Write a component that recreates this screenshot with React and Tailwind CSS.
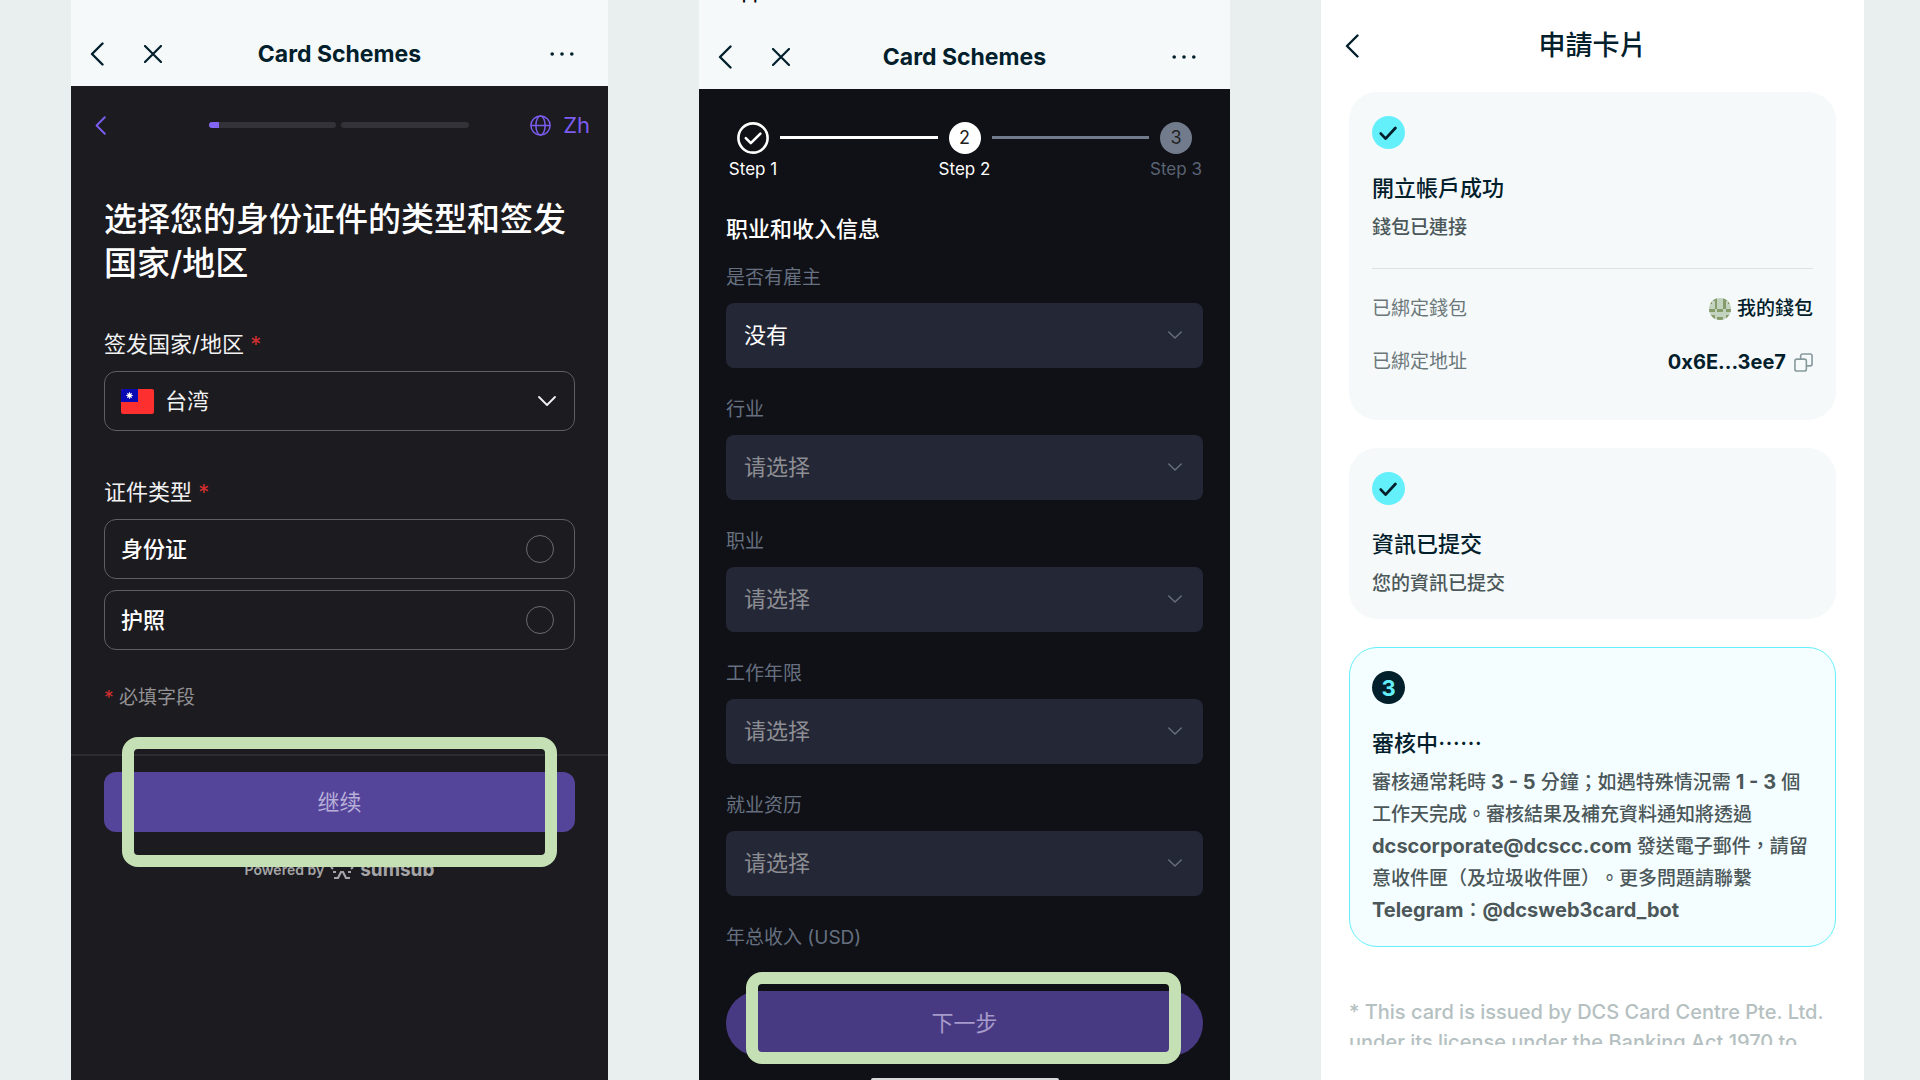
import React, { useState } from "react";

const employerOptions = ["没有", "有"];

const fields = [
  { id: "employer", label: "是否有雇主", options: employerOptions },
  { id: "industry", label: "行业" },
  { id: "occupation", label: "职业" },
  { id: "years", label: "工作年限" },
  { id: "experience", label: "就业资历" },
];

// 8x8 identicon, 1 = dark cell
const avatarRows = [
  "11100111",
  "10100101",
  "00100100",
  "00100100",
  "11011011",
  "00000000",
  "11000011",
  "11011011",
];

const BackIcon = ({ className }) => (
  <svg viewBox="0 0 14 24" className={className} fill="none" stroke="currentColor" strokeLinecap="round" strokeLinejoin="round">
    <path d="M12.5 1.5 2 12l10.5 10.5" strokeWidth="2.4" />
  </svg>
);

const ChevronDown = ({ className }) => (
  <svg viewBox="0 0 18 10" className={className} fill="none" stroke="currentColor" strokeLinecap="round" strokeLinejoin="round">
    <path d="M1 1l8 8 8-8" strokeWidth="1.8" />
  </svg>
);

const DoneBadge = () => (
  <svg viewBox="0 0 33 33" className="size-[33px]" fill="none">
    <circle cx="16.5" cy="16.5" r="16.5" fill="#64f0fb" />
    <path d="M8.8 17.6l4.8 5L23.4 12" stroke="#02202b" strokeWidth="2.8" strokeLinecap="round" strokeLinejoin="round" />
  </svg>
);

const Highlight = ({ className }) => (
  <div className={`pointer-events-none absolute rounded-2xl border-12 border-[#c5e0b4] ${className}`} />
);

const Required = () => <span className="text-[#d32f2f]">*</span>;

const WebviewHeader = ({ status, className }) => (
  <header className={`flex flex-col bg-[#f5f9fa] text-[#02202b] ${className}`}>
    <div className="flex h-[3px] items-end overflow-hidden pl-[30px] text-lg leading-5 font-medium text-black">{status}</div>
    <div className="mt-auto grid h-16 grid-cols-[1fr_auto_1fr] items-center px-[19px]">
      <div className="flex items-center gap-10">
        <button type="button" aria-label="Back"><BackIcon className="h-6 w-3.5" /></button>
        <button type="button" aria-label="Close">
          <svg viewBox="0 0 18 18" className="size-[18px]" stroke="currentColor" strokeWidth="2.2" strokeLinecap="round">
            <path d="M1 1l16 16M17 1L1 17" />
          </svg>
        </button>
      </div>
      <h1 className="text-[23px] leading-8 font-bold">Card Schemes</h1>
      <button type="button" aria-label="More" className="justify-self-end pr-[15px]">
        <svg viewBox="0 0 24 4" className="h-1 w-6" fill="currentColor">
          <circle cx="2.2" cy="2" r="1.8" />
          <circle cx="12" cy="2" r="1.8" />
          <circle cx="21.8" cy="2" r="1.8" />
        </svg>
      </button>
    </div>
  </header>
);

const IdentityPhone = () => {
  const [docType, setDocType] = useState("");

  return (
    <section lang="zh-CN" className="flex flex-col bg-[#1c1b1f] font-['Inter','Noto_Sans_CJK_SC',sans-serif]">
      <WebviewHeader className="h-[86px]" />

      <div className="mt-[25px] grid h-7 grid-cols-[114fr_259fr_121fr] items-center pr-[18px] pl-6 text-[#7b5cf0]">
        <button type="button" aria-label="返回"><BackIcon className="h-[19px] w-[11px]" /></button>
        <div className="flex gap-[5px]">
          <div className="h-1.5 flex-1 overflow-hidden rounded-full bg-[#333238]">
            <div className="h-full w-2.5 bg-[#8265f2]" />
          </div>
          <div className="h-1.5 flex-1 rounded-full bg-[#333238]" />
        </div>
        <button type="button" className="flex items-center gap-3 justify-self-end text-[22px] leading-7">
          <svg viewBox="0 0 21 21" className="size-[21px]" fill="none" stroke="currentColor" strokeWidth="1.5">
            <circle cx="10.5" cy="10.5" r="9.6" />
            <ellipse cx="10.5" cy="10.5" rx="4.6" ry="9.6" />
            <path d="M1 10.5h19" />
          </svg>
          Zh
        </button>
      </div>

      <form className="flex flex-col px-[33px] text-[#f2f2f3]">
        <h2 className="mt-[58px] text-[33px] leading-[44px] font-medium text-white">选择您的身份证件的类型和签发国家/地区</h2>

        <label htmlFor="country" className="mt-11 text-[22px] leading-[30px]">签发国家/地区 <Required /></label>
        <div className="relative mt-3">
          <select id="country" className="h-[60px] w-full appearance-none rounded-xl border border-[#5f5e62] bg-transparent pl-[60px] text-[22px]">
            <option>台湾</option>
          </select>
          <svg viewBox="0 0 33 25" className="pointer-events-none absolute top-[18px] left-[17px] h-[25px] w-[33px] rounded-xs">
            <rect width="33" height="25" fill="#fe2f2f" />
            <rect width="17" height="13" fill="#0a0ab4" />
            <circle cx="8.5" cy="6.5" r="2.3" fill="#fff" />
            <path d="M8.5 3v7M5 6.5h7M6 4l5 5M11 4L6 9" stroke="#fff" strokeWidth="0.7" />
          </svg>
          <ChevronDown className="pointer-events-none absolute top-[25px] right-[19px] h-2.5 w-[18px]" />
        </div>

        <fieldset className="mt-[46px]">
          <legend className="text-[22px] leading-[30px]">证件类型 <Required /></legend>
          <div className="mt-3 flex flex-col gap-[11px]">
            {["身份证", "护照"].map((name) => (
              <label key={name} className="flex h-[60px] items-center justify-between rounded-xl border border-[#5f5e62] pr-5 pl-4 text-[22px] font-medium text-white">
                {name}
                <input
                  type="radio"
                  name="docType"
                  value={name}
                  checked={docType === name}
                  onChange={(e) => setDocType(e.target.value)}
                  className="size-7 appearance-none rounded-full border border-[#6b6a6e] checked:border-8 checked:border-[#7b5cf0]"
                />
              </label>
            ))}
          </div>
        </fieldset>

        <p className="mt-[33px] text-[19px] leading-[30px] text-[#929194]"><Required /> 必填字段</p>
      </form>

      <div className="mt-[41px] border-t-2 border-[#2c2b30] px-[33px] pt-4">
        <div className="relative">
          <button type="button" className="h-[60px] w-full rounded-xl bg-[#54449a] text-[22px] text-[#b8b0d8]">继续</button>
          <Highlight className="inset-x-[18px] -inset-y-[35px]" />
        </div>
      </div>
      <div className="mt-[26px] flex h-6 items-center justify-center gap-1.5 text-sm font-semibold text-[#a5a5a7]">
        Powered by
        <svg viewBox="0 0 24 22" className="h-[22px] w-6" fill="none" stroke="currentColor" strokeWidth="2.2">
          <path d="M1 8l2 2M23 8l-2 2M3 13h3M21 13h-3M4 19h4l3-6h2l3 6h4M12 2v4" />
        </svg>
        <span className="text-[19px] leading-6 font-bold">sumsub</span>
      </div>
    </section>
  );
};

const IncomePhone = () => (
  <section lang="zh-CN" className="flex flex-col bg-[#101116] font-['Inter','Noto_Sans_CJK_SC',sans-serif]">
    <WebviewHeader status="App Store" className="h-[89px]" />

    <form className="flex flex-col px-[27px] pt-[33px]">
      <ol className="flex text-[17px] leading-[22px]">
        <li className="flex w-[54px] flex-col items-center gap-1 whitespace-nowrap text-white">
          <svg viewBox="0 0 32 32" className="size-8" fill="none" stroke="currentColor" strokeLinecap="round" strokeLinejoin="round">
            <circle cx="16" cy="16" r="14.6" strokeWidth="2.6" />
            <path d="M8.8 16.2l5 5 9.6-9.6" strokeWidth="2.6" />
          </svg>
          Step 1
        </li>
        <li aria-hidden="true" className="mt-[14px] h-[3px] flex-1 bg-white" />
        <li className="flex w-[54px] flex-col items-center gap-1 whitespace-nowrap text-white">
          <span className="flex size-8 items-center justify-center rounded-full bg-white text-lg text-[#222]">2</span>
          Step 2
        </li>
        <li aria-hidden="true" className="mt-[14px] h-[3px] flex-1 bg-[#727b8c]" />
        <li className="flex w-[54px] flex-col items-center gap-1 whitespace-nowrap text-[#5a6373]">
          <span className="flex size-8 items-center justify-center rounded-full bg-[#727b8c] text-lg text-[#222]">3</span>
          Step 3
        </li>
      </ol>

      <h2 className="mt-[34px] text-[22px] leading-[30px] font-medium text-white">职业和收入信息</h2>

      <div className="mt-[19px] flex flex-col gap-[27px] text-[#667080]">
        {fields.map((field) => (
          <div key={field.id}>
            <label htmlFor={field.id} className="block text-[19px] leading-[30px]">{field.label}</label>
            <div className="relative mt-2.5">
              <select
                id={field.id}
                className={`h-[65px] w-full appearance-none rounded-lg bg-[#242735] pl-[18px] text-[22px] ${field.options ? "text-white" : "text-[#8d8e94]"}`}
              >
                {(field.options || ["请选择"]).map((option) => (
                  <option key={option}>{option}</option>
                ))}
              </select>
              <ChevronDown className="pointer-events-none absolute top-7 right-[21px] h-2 w-3.5" />
            </div>
          </div>
        ))}
        <p className="text-[19px] leading-[30px]">年总收入 (USD)</p>
      </div>

      <div className="relative mt-[38px]">
        <button type="button" className="h-[65px] w-full rounded-full bg-[#483a82] text-[22px] text-[#a69bca]">下一步</button>
        <Highlight className="-top-[19px] right-[22px] -bottom-2 left-5" />
      </div>
      <div className="mx-auto mt-[22px] h-0.5 w-[188px] rounded-t-full bg-[#d9d9d9]" />
    </form>
  </section>
);

const CardTitle = ({ children }) => (
  <h2 className="mt-[21px] font-['Noto_Sans_CJK_TC',sans-serif] text-[22px] leading-8 font-medium text-[#02202b]">{children}</h2>
);

const ApplyPhone = () => (
  <section
    lang="zh-TW"
    className="flex flex-col bg-white font-['Inter','Noto_Sans_CJK_TC',sans-serif] text-[19px] leading-8 text-[#4b5759] [text-spacing-trim:space-all]"
  >
    <header className="grid h-[92px] grid-cols-[1fr_auto_1fr] items-center px-6 text-[#02202b]">
      <button type="button" aria-label="返回"><BackIcon className="h-6 w-3.5" /></button>
      <h1 className="text-[27px] leading-10 font-medium">申請卡片</h1>
    </header>

    <div className="flex flex-col gap-7 px-7">
      <article className="rounded-[28px] bg-[#f5f9fa] px-[23px] pt-6 pb-[42px]">
        <DoneBadge />
        <CardTitle>開立帳戶成功</CardTitle>
        <p className="mt-2.5 font-medium">錢包已連接</p>
        <dl className="mt-6 flex flex-col gap-[21px] border-t border-[#dde2e3] pt-6">
          <div className="flex justify-between">
            <dt className="text-[#6b7779]">已綁定錢包</dt>
            <dd className="flex items-center gap-1.5 font-medium text-[#02202b]">
              <svg viewBox="0 0 8 8" className="size-[22px] rounded-full bg-[#c2d3bf]" shapeRendering="crispEdges">
                {avatarRows.map((row, y) =>
                  row.split("").map((cell, x) =>
                    cell === "1" ? <rect key={`${x}-${y}`} x={x} y={y} width="1" height="1" fill="#869a6a" /> : null
                  )
                )}
              </svg>
              我的錢包
            </dd>
          </div>
          <div className="flex justify-between">
            <dt className="text-[#6b7779]">已綁定地址</dt>
            <dd className="flex items-center gap-2 text-xl leading-8 font-bold text-[#02202b]">
              0x6E...3ee7
              <button type="button" aria-label="複製">
                <svg viewBox="0 0 20 20" className="size-[19px]" fill="none" stroke="#87999c" strokeWidth="1.7" strokeLinejoin="round">
                  <rect x="1" y="6.5" width="12" height="12.5" rx="2" />
                  <path d="M7 6.5V3a2 2 0 0 1 2-2h8a2 2 0 0 1 2 2v8.5a2 2 0 0 1-2 2h-4" />
                </svg>
              </button>
            </dd>
          </div>
        </dl>
      </article>

      <article className="rounded-[28px] bg-[#f5f9fa] px-[23px] pt-6 pb-[19px]">
        <DoneBadge />
        <CardTitle>資訊已提交</CardTitle>
        <p className="mt-2.5 font-medium">您的資訊已提交</p>
      </article>

      <article className="rounded-[28px] border border-[#64f0fb] bg-[#f4fdff] px-[22px] pt-[23px] pb-[19px]">
        <span className="flex size-[33px] items-center justify-center rounded-full bg-[#02202b] text-[22px] font-bold text-[#64f0fb]">3</span>
        <CardTitle>審核中……</CardTitle>
        <p className="mt-2.5 font-medium [&_b]:text-xl [&_b]:leading-6">
          審核通常耗時 <b>3 - 5</b> 分鐘；如遇特殊情況需 <b>1 - 3</b> 個工作天完成。審核結果及補充資料通知將透過{" "}
          <b>dcscorporate@dcscc.com</b> 發送電子郵件，請留意收件匣（及垃圾收件匣）。更多問題請聯繫 <b>Telegram</b>：<b>@dcsweb3card_bot</b>
        </p>
      </article>
    </div>

    <p className="mx-7 mt-[50px] h-12 overflow-hidden text-xl leading-[30px] font-medium text-[#b5c0c1]">
      * This card is issued by DCS Card Centre Pte. Ltd. under its license under the Banking Act 1970 to
    </p>
  </section>
);

const App = () => {
  return (
    <main className="grid min-h-screen grid-cols-[537fr_531fr_543fr] gap-x-[91px] bg-[#e9efef] pr-14 pl-[71px]">
      <IdentityPhone />
      <IncomePhone />
      <ApplyPhone />
    </main>
  );
};

export default App;
